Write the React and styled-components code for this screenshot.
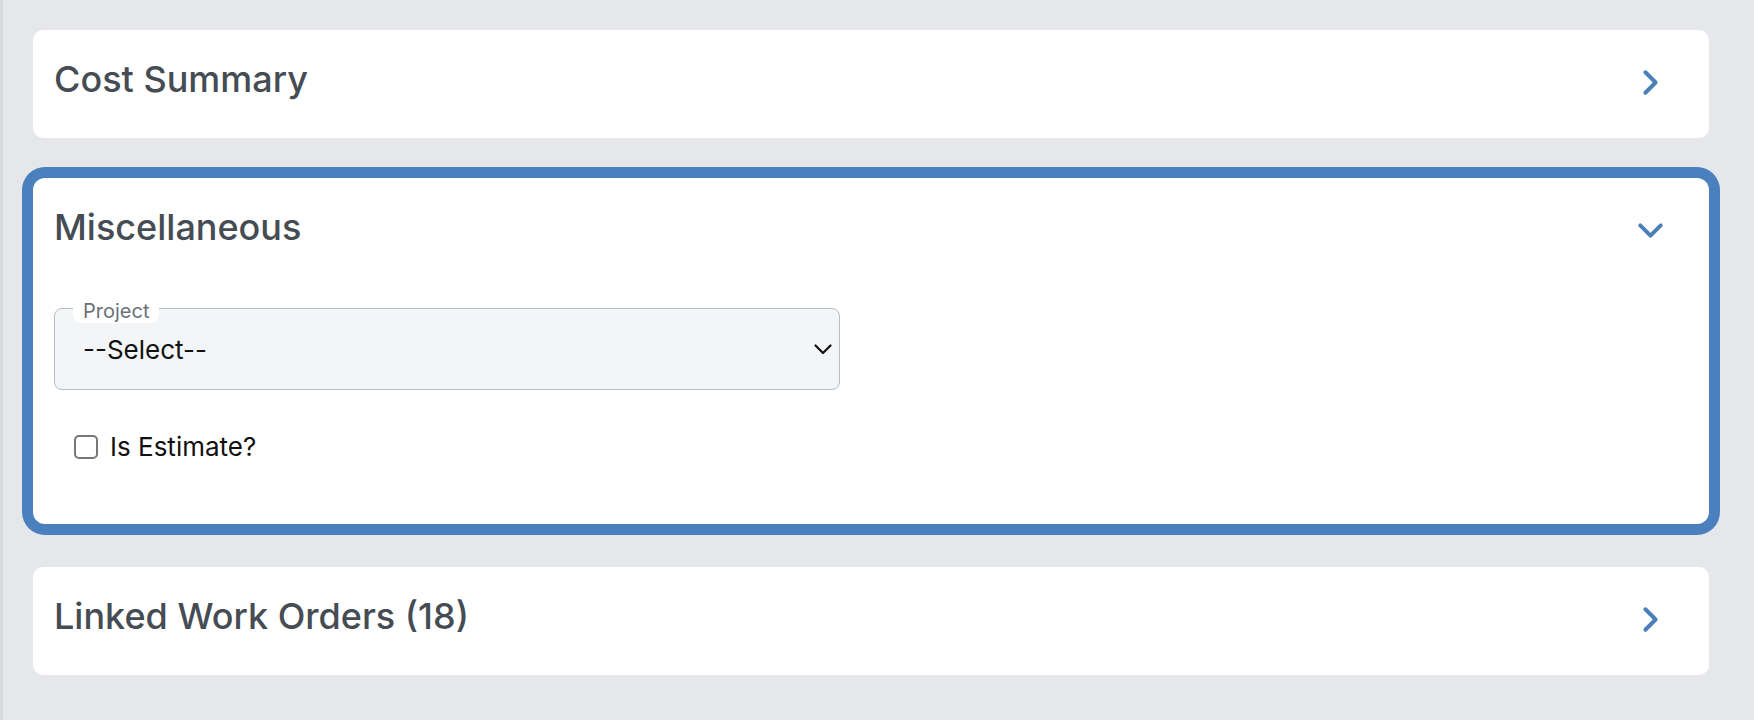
import React, { useState } from 'react';
import styled, { createGlobalStyle, css } from 'styled-components';
import { ChevronRight, ChevronDown } from 'lucide-react';

const GlobalStyle = createGlobalStyle`
  body {
    margin: 0;
    background: #e5e7eb;
    font-family: Inter, "Noto Sans", "Liberation Sans", sans-serif;
  }
`;

const sections = [
  { id: 'cost', title: 'Cost Summary' },
  { id: 'misc', title: 'Miscellaneous' },
  { id: 'linked', title: 'Linked Work Orders (18)' },
];

const App = () => {
  const [open, setOpen] = useState('misc');
  const [estimate, setEstimate] = useState(false);

  return (
    <>
      <GlobalStyle />
      <Page>
        {sections.map((s) => {
          const isOpen = open === s.id;
          return (
            <Card key={s.id} $open={isOpen}>
              <Header onClick={() => setOpen(isOpen ? null : s.id)}>
                <Title>{s.title}</Title>
                <Toggle>
                  {isOpen ? (
                    <ChevronDown size={41} strokeWidth={2.3} />
                  ) : (
                    <ChevronRight size={41} strokeWidth={2.3} />
                  )}
                </Toggle>
              </Header>
              {isOpen && s.id === 'misc' && (
                <Body>
                  <Field>
                    <FieldLabel>Project</FieldLabel>
                    <SelectBox>
                      <span>--Select--</span>
                      <svg width="18" height="11" viewBox="0 0 18 11">
                        <polyline
                          points="1.5,1.5 9,9 16.5,1.5"
                          fill="none"
                          stroke="#111"
                          strokeWidth="2.2"
                          strokeLinecap="round"
                          strokeLinejoin="round"
                        />
                      </svg>
                    </SelectBox>
                  </Field>
                  <CheckRow onClick={() => setEstimate(!estimate)}>
                    <Box $checked={estimate} />
                    <span>Is Estimate?</span>
                  </CheckRow>
                </Body>
              )}
            </Card>
          );
        })}
      </Page>
    </>
  );
};

export default App;

const Page = styled.div`
  min-height: 100vh;
  box-sizing: border-box;
  border-left: 3px solid #d6d9de;
  padding: 30px 45px 40px 30px;
  display: flex;
  flex-direction: column;
  gap: 40px;
`;

const Card = styled.section`
  background: #fff;
  border-radius: 10px;
  min-height: 108px;

  ${({ $open }) =>
    $open &&
    css`
      margin-bottom: 3px;
      border-radius: 12px;
      box-shadow: 0 0 0 11px #4a80bd;
    `}
`;

const Header = styled.div`
  display: flex;
  justify-content: space-between;
  align-items: flex-start;
  padding: 27px 38px 0 21px;
  cursor: pointer;
`;

const Title = styled.h2`
  margin: 0;
  font-size: 36px;
  line-height: 44px;
  font-weight: 500;
  color: #454c53;
`;

const Toggle = styled.span`
  display: flex;
  margin-top: 5px;
  color: #4a7fb9;
`;

const Body = styled.div`
  padding: 57px 21px 65px;
  display: flex;
  flex-direction: column;
  gap: 45px;
`;

const Field = styled.div`
  position: relative;
  width: 786px;
`;

const FieldLabel = styled.label`
  position: absolute;
  left: 19px;
  top: -9px;
  height: 24px;
  padding: 0 10px;
  border-radius: 8px;
  background: #fff;
  font-size: 20px;
  line-height: 24px;
  color: #6b7176;
`;

const SelectBox = styled.div`
  height: 82px;
  box-sizing: border-box;
  display: flex;
  align-items: center;
  justify-content: space-between;
  padding: 0 7px 0 28px;
  border: 1.5px solid #b8bec5;
  border-radius: 8px;
  background: #f3f5f7;
  font-size: 26px;
  color: #111;
`;

const CheckRow = styled.div`
  display: flex;
  align-items: center;
  gap: 12px;
  height: 24px;
  margin-left: 20px;
  font-size: 26px;
  line-height: 24px;
  color: #111;
  cursor: pointer;
`;

const Box = styled.span`
  width: 24px;
  height: 24px;
  box-sizing: border-box;
  border: 2px solid #777;
  border-radius: 5px;
  background: ${({ $checked }) => ($checked ? '#4a80bd' : '#fff')};
`;
